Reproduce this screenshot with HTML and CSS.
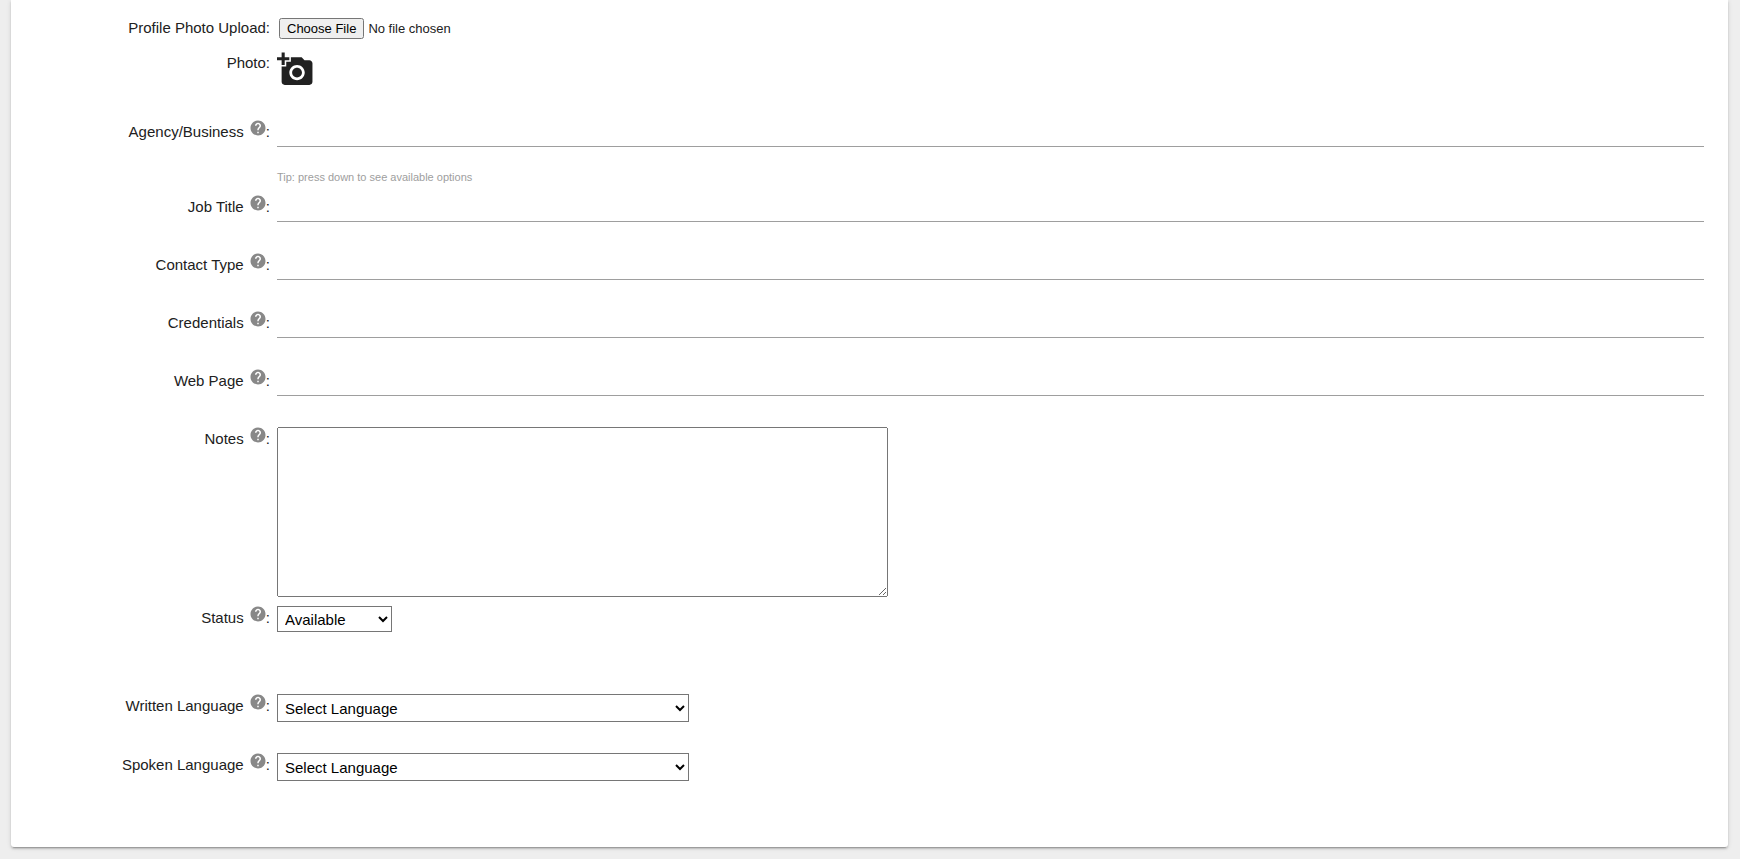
FILE: index.html
```html
<!DOCTYPE html>
<html lang="en">
    <head>
        <meta charset="UTF-8" />
        <meta name="viewport" content="width=device-width, initial-scale=1" />
        <title>Contact</title>
        <link rel="stylesheet" href="styles.css">
    </head>
    <body>
        <svg class="sprite" aria-hidden="true">
            <symbol id="help" viewBox="0 0 24 24">
                <path d="M12 2C6.48 2 2 6.48 2 12s4.48 10 10 10 10-4.48 10-10S17.52 2 12 2zm1 17h-2v-2h2v2zm2.07-7.75l-.9.92C13.45 12.9 13 13.5 13 15h-2v-.5c0-1.1.45-2.1 1.17-2.83l1.24-1.26c.37-.36.59-.86.59-1.41 0-1.1-.9-2-2-2s-2 .9-2 2H8c0-2.21 1.79-4 4-4s4 1.79 4 4c0 .88-.36 1.68-.93 2.25z" />
            </symbol>
        </svg>
        <form class="card">
            <div class="row row-upload">
                <label for="upload">Profile Photo Upload:</label>
                <div class="field"><input type="file" id="upload" class="file" /></div>
            </div>
            <div class="row row-photo">
                <label for="photo">Photo:</label>
                <div class="field">
                    <button type="button" id="photo" class="photo-btn">
                        <svg class="camera" viewBox="0 0 24 24">
                            <path d="M3 4V1h2v3h3v2H5v3H3V6H0V4h3zm3 6V7h3V4h7l1.83 2H21c1.1 0 2 .9 2 2v12c0 1.1-.9 2-2 2H5c-1.1 0-2-.9-2-2V10h3zm7 9c2.76 0 5-2.24 5-5s-2.24-5-5-5-5 2.24-5 5 2.24 5 5 5zm-3.2-5c0 1.77 1.43 3.2 3.2 3.2s3.2-1.43 3.2-3.2-1.43-3.2-3.2-3.2-3.2 1.43-3.2 3.2z" />
                        </svg>
                    </button>
                </div>
            </div>
            <div class="row row-agency">
                <label for="agency">Agency/Business <svg class="help"><use href="#help" /></svg>:</label>
                <div class="field">
                    <input type="text" id="agency" class="line" />
                    <div class="tip">Tip: press down to see available options</div>
                </div>
            </div>
            <div class="row">
                <label for="job">Job Title <svg class="help"><use href="#help" /></svg>:</label>
                <div class="field"><input type="text" id="job" class="line" /></div>
            </div>
            <div class="row">
                <label for="type">Contact Type <svg class="help"><use href="#help" /></svg>:</label>
                <div class="field"><input type="text" id="type" class="line" /></div>
            </div>
            <div class="row">
                <label for="credentials">Credentials <svg class="help"><use href="#help" /></svg>:</label>
                <div class="field"><input type="text" id="credentials" class="line" /></div>
            </div>
            <div class="row">
                <label for="web">Web Page <svg class="help"><use href="#help" /></svg>:</label>
                <div class="field"><input type="text" id="web" class="line" /></div>
            </div>
            <div class="row row-notes">
                <label for="notes">Notes <svg class="help"><use href="#help" /></svg>:</label>
                <div class="field"><textarea id="notes" class="notes"></textarea></div>
            </div>
            <div class="row row-status">
                <label for="status">Status <svg class="help"><use href="#help" /></svg>:</label>
                <div class="field">
                    <select id="status" class="status">
                        <option>Available</option>
                        <option>Unavailable</option>
                    </select>
                </div>
            </div>
            <div class="row row-language">
                <label for="written">Written Language <svg class="help"><use href="#help" /></svg>:</label>
                <div class="field">
                    <select id="written" class="language">
                        <option>Select Language</option>
                    </select>
                </div>
            </div>
            <div class="row row-language">
                <label for="spoken">Spoken Language <svg class="help"><use href="#help" /></svg>:</label>
                <div class="field">
                    <select id="spoken" class="language">
                        <option>Select Language</option>
                    </select>
                </div>
            </div>
        </form>
    </body>
</html>
```
FILE: styles.css
```css
* {
    box-sizing: border-box;
}
body {
    margin: 0;
    background-color: #eee;
    color: #212121;
    font-family: Arial, "Liberation Sans", sans-serif;
    font-size: 15px;
    line-height: 20px;
}
.sprite {
    display: none;
}
.card {
    margin: 0 12px 12px 11px;
    padding: 16px 24px 35px 0;
    background-color: #fff;
    border-radius: 0 0 3px 3px;
    box-shadow: 0 2px 2px 0 rgba(0, 0, 0, 0.14), 0 3px 1px -2px rgba(0, 0, 0, 0.2), 0 1px 5px 0 rgba(0, 0, 0, 0.12);
}
.row {
    display: grid;
    grid-template-columns: 259px 1fr;
    column-gap: 7px;
    align-items: start;
    min-height: 58px;
}
.row label {
    padding-top: 2px;
    text-align: right;
}
.help {
    width: 18px;
    height: 18px;
    margin: -4px -1px 0 1px;
    fill: #888;
    vertical-align: baseline;
}
.row-upload {
    min-height: 35px;
}
.row-photo {
    min-height: 69px;
}
.row-agency {
    min-height: 75px;
}
.row-notes {
    min-height: 179px;
}
.row-status {
    min-height: 88px;
}
.row-language {
    min-height: 59px;
}
.file {
    display: block;
    margin: 2px;
    font-family: inherit;
    font-size: 13px;
}
.photo-btn {
    display: block;
    padding: 0;
    border: none;
    background: none;
    cursor: pointer;
}
.camera {
    display: block;
    width: 37px;
    height: 37px;
    fill: #212121;
}
.line {
    display: block;
    width: 100%;
    height: 27px;
    padding: 0;
    border: none;
    border-bottom: 1px solid #9e9e9e;
    background: transparent;
    font: inherit;
    outline: none;
}
.tip {
    margin-top: 20px;
    color: #9e9e9e;
    font-size: 11px;
}
.notes {
    display: block;
    width: 611px;
    max-width: 100%;
    height: 170px;
    font: inherit;
}
select {
    display: block;
    padding: 0 3px;
    background-color: #fff;
    color: #000;
    font-family: inherit;
    font-size: 15px;
}
.status {
    width: 115px;
    height: 26px;
}
.language {
    width: 412px;
    max-width: 100%;
    height: 28px;
}
```
